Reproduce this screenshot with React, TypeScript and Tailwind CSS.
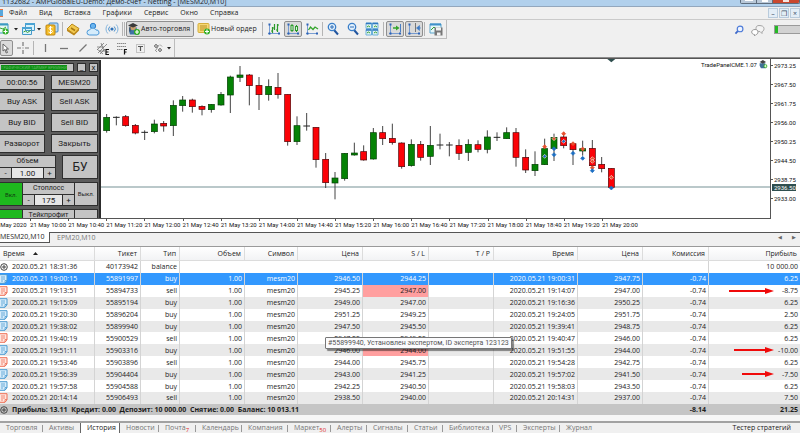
import { type ReactNode } from 'react'
import clsx from 'clsx'

const MENU = ['Файл', 'Вид', 'Вставка', 'Графики', 'Сервис', 'Окно', 'Справка']

const PRICES = ['2973.25', '2967.50', '2961.75', '2956.00', '2950.25', '2944.50', '2938.75', '2933.00']

const TIMES = [
  '2020', '10:00', '10:40', '11:20', '12:00', '12:40', '13:20', '14:00', '14:40',
  '15:20', '16:00', '16:40', '17:20', '18:00', '18:40', '19:20', '20:00',
]

// [high, body top, body bottom, low, up = 1 / down = 0]
const CANDLES = [
  [165, 175, 215, 221, 1], [172, 174, 175, 199, 0], [168, 173, 200, 203, 0], [195, 199, 222, 226, 0],
  [214, 219, 221, 243, 0], [182, 195, 218, 223, 1], [186, 193, 201, 218, 0], [124, 139, 200, 231, 1],
  [111, 123, 140, 158, 1], [119, 123, 143, 161, 0], [139, 142, 151, 169, 0], [135, 136, 152, 161, 1],
  [99, 106, 138, 140, 1], [50, 54, 108, 162, 1], [21, 48, 55, 69, 1], [45, 48, 80, 139, 0],
  [54, 79, 107, 153, 0], [61, 82, 107, 125, 1], [42, 85, 107, 119, 0], [106, 106, 248, 260, 0],
  [172, 200, 248, 258, 1], [162, 200, 202, 215, 0], [205, 205, 302, 326, 0], [282, 301, 371, 387, 0],
  [339, 357, 372, 421, 1], [282, 283, 359, 365, 1], [251, 282, 288, 290, 1], [259, 278, 303, 305, 0],
  [207, 221, 300, 302, 1], [201, 221, 239, 258, 0], [194, 238, 251, 257, 0], [250, 252, 323, 329, 0],
  [241, 256, 320, 323, 1], [246, 256, 295, 305, 0], [201, 259, 292, 318, 1], [224, 257, 259, 271, 0],
  [249, 257, 259, 292, 0], [241, 259, 283, 303, 0], [241, 256, 280, 306, 1], [244, 257, 271, 280, 0],
  [214, 234, 271, 283, 1], [220, 234, 235, 246, 0], [205, 221, 239, 239, 1], [207, 221, 295, 323, 0],
  [271, 295, 333, 342, 0], [277, 316, 335, 351, 1], [239, 269, 317, 318, 1], [224, 235, 269, 306, 1],
  [220, 234, 260, 268, 0], [250, 254, 272, 318, 0], [245, 269, 276, 290, 1], [243, 268, 320, 338, 0],
  [294, 316, 329, 340, 0], [328, 328, 385, 388, 0],
]

// [candle index, y, colour, outlined]
const DEALS: [number, number, string, boolean][] = [
  [46, 263, '#e8502e', false], [46, 292, '#1c6fc4', true], [47, 239, '#e8502e', true],
  [47, 269, '#1c6fc4', false], [47, 287, '#1c6fc4', false], [48, 224, '#e8502e', false],
  [48, 247, '#1c6fc4', true], [49, 254, '#e8502e', false], [49, 283, '#1c6fc4', false],
  [50, 270, '#e8502e', false], [50, 298, '#1c6fc4', false], [51, 299, '#e8502e', true],
  [51, 307, '#e8502e', true], [51, 326, '#e8502e', false], [51, 335, '#1c6fc4', false],
  [53, 355, '#e8502e', true], [53, 387, '#1c6fc4', false],
]

const TRADES = [
  { time: '19:00:15', ticket: '55891997', type: 'buy', open: '2946.50', sl: '2944.25', close: '19:00:31', price: '2947.75', profit: '6.25' },
  { time: '19:13:51', ticket: '55894733', type: 'sell', open: '2945.25', sl: '2947.00', close: '19:14:07', price: '2947.00', profit: '-8.75', stopped: true, arrow: 45 },
  { time: '19:15:09', ticket: '55895194', type: 'buy', open: '2949.00', sl: '2947.00', close: '19:16:36', price: '2950.25', profit: '6.25' },
  { time: '19:20:30', ticket: '55896204', type: 'buy', open: '2951.25', sl: '2949.25', close: '19:24:05', price: '2951.75', profit: '2.50' },
  { time: '19:38:02', ticket: '55899940', type: 'buy', open: '2947.50', sl: '2945.50', close: '19:39:41', price: '2948.75', profit: '6.25' },
  { time: '19:40:19', ticket: '55900529', type: 'sell', open: '2947.25', sl: '2949.25', close: '19:40:47', price: '2946.00', profit: '6.25' },
  { time: '19:51:11', ticket: '55903316', type: 'buy', open: '2946.00', sl: '2944.00', close: '19:51:55', price: '2944.00', profit: '-10.00', stopped: true, arrow: 40 },
  { time: '19:53:46', ticket: '55903896', type: 'sell', open: '2944.00', sl: '2945.75', close: '19:54:28', price: '2942.75', profit: '6.25' },
  { time: '19:56:39', ticket: '55904404', type: 'buy', open: '2943.00', sl: '2941.25', close: '19:57:02', price: '2941.50', profit: '-7.50', arrow: 32 },
  { time: '19:57:58', ticket: '55904588', type: 'buy', open: '2942.25', sl: '2940.50', close: '19:58:03', price: '2943.50', profit: '6.25' },
  { time: '20:14:14', ticket: '55906493', type: 'sell', open: '2938.50', sl: '2940.00', close: '20:14:31', price: '2937.00', profit: '7.50' },
]

const TABS = [
  { label: 'Торговля', width: 'w-[43px]' },
  { label: 'Активы', width: 'w-[37px]' },
  { label: 'История', width: 'w-[40px]', active: true },
  { label: 'Новости', width: 'w-[39px]' },
  { label: 'Почта', width: 'w-[37px]', badge: '7' },
  { label: 'Календарь', width: 'w-[46px]' },
  { label: 'Компания', width: 'w-[46px]' },
  { label: 'Маркет', width: 'w-[43px]', badge: '50' },
  { label: 'Алерты', width: 'w-[36px]' },
  { label: 'Сигналы', width: 'w-[41px]' },
  { label: 'Статьи', width: 'w-[35px]' },
  { label: 'Библиотека', width: 'w-[50px]' },
  { label: 'VPS', width: 'w-[24px]' },
  { label: 'Эксперты', width: 'w-[43px]' },
  { label: 'Журнал', width: 'w-[37px]' },
]

function Icon({ children, className }: { children: ReactNode; className?: string }) {
  return (
    <svg viewBox="0 0 14 14" fill="none" aria-hidden="true" className={clsx('shrink-0', className ?? 'size-[14px]')}>
      {children}
    </svg>
  )
}

function Tool({ label, width, pressed, children }: { label: string; width: string; pressed?: boolean; children: ReactNode }) {
  return (
    <button
      aria-label={label}
      className={clsx(
        'flex h-4 shrink-0 items-center justify-center',
        width,
        pressed && 'rounded-[2px] border border-[#8f8f8f] bg-[#dadada]'
      )}
    >
      {children}
    </button>
  )
}

function Separator() {
  return <span className="h-[14px] w-px shrink-0 bg-[#b5b5b5]" />
}

function Drop() {
  return (
    <svg viewBox="0 0 4 3" aria-hidden="true" className="h-[3px] w-1 shrink-0">
      <path d="M0 0h4L2 2.6z" fill="#222" />
    </svg>
  )
}

function Plus({ x, y }: { x: number; y: number }) {
  return (
    <g>
      <circle cx={x} cy={y} r="3" fill="#2fae22" />
      <path d={`M${x - 2} ${y}h4M${x} ${y - 2}v4`} stroke="#fff" strokeWidth="1.2" />
    </g>
  )
}

function Axes() {
  return <path d="M2.5 2v10.500M1 11.500h11.500" stroke="#6b94cf" strokeWidth=".9" />
}

function AxisDots() {
  return <path d="M1.500 1.500h2v2h-2zM1.500 10.500h2v2h-2zM11 10.500h2v2h-2z" fill="#2d62b5" />
}

function Toolbar() {
  return (
    <div className="flex h-[19px] items-center">
      <div className="flex h-[19px] items-center border-r border-b border-[#bdbdbd]">
        <Tool label="Новый график" width="w-[11px]">
          <Icon className="-ml-1 size-[14px]">
            <path d="M0 2h11v9H0z" fill="#e8f7f2" stroke="#3c9bc2" />
            <path d="M0 2.5h11" stroke="#3c9bc2" strokeWidth="2" />
            <path d="M0 8l3-2 3 1 3-2" stroke="#39a839" />
            <Plus x={8.5} y={9.5} />
          </Icon>
        </Tool>
        <span className="flex w-[9px] justify-center"><Drop /></span>
        <Tool label="Профили" width="w-4">
          <Icon>
            <path d="M4.5 1.5h9v7h-9zM1.500 5.500h9v7h-9z" fill="#d9f2fa" stroke="#4699c8" />
            <path d="M4 2h10M1 6h10" stroke="#4aa3d4" strokeWidth="2" />
            <path d="M2.500 10l2-1 2 1.500 3-2" stroke="#36a136" />
          </Icon>
        </Tool>
        <span className="flex w-[6px] justify-center"><Drop /></span>
        <Tool label="Обзор рынка" width="w-5">
          <Icon>
            <rect x="4" y="1" width="9" height="9" rx="1" fill="#b9daf4" stroke="#4489c5" />
            <rect x="1" y="3" width="9" height="10" rx="1" fill="#f4bd28" stroke="#bd8410" />
            <path d="M7.500 5.800C6.500 5 4 5 4 6.500S7.500 8 7.500 9.500 4.500 11 3.500 10M5.500 4v8" stroke="#fff" />
          </Icon>
        </Tool>
        <Separator />
        <Tool label="Навигатор" width="w-5">
          <Icon>
            <path d="M1 7l5-5 7 4.500L8 12z" fill="#f2c94f" stroke="#b98a1c" />
            <path d="M1 7v2l7 4.500L13 8.500v-2L8 12z" fill="#bd8717" />
            <path d="M5 6l4 2.500" stroke="#a87a12" strokeWidth="1.500" />
          </Icon>
        </Tool>
        <Tool label="Облако" width="w-[19px]">
          <Icon>
            <circle cx="7" cy="4" r="2.700" fill="#6cb5ee" stroke="#2f81cd" />
            <path d="M3.500 13a2.500 2.500 0 010-5C4 6 9 5.500 10 8a2.500 2.500 0 011 5z" fill="#d5ecfb" stroke="#4b98d8" />
          </Icon>
        </Tool>
        <Tool label="Сигналы" width="w-[19px]">
          <Icon>
            <circle cx="7" cy="7" r="1.600" fill="#2d70b8" />
            <path d="M4.800 4.500a3.500 3.500 0 000 5M9.200 4.500a3.500 3.500 0 010 5" stroke="#4a90cc" />
            <path d="M2.800 2.500a6.500 6.500 0 000 9M11.200 2.500a6.500 6.500 0 010 9" stroke="#86b5dd" />
          </Icon>
        </Tool>
        <span className="flex w-[5px] justify-end gap-px pr-px"><Separator /><Separator /></span>
        <button className="flex h-4 w-[68px] shrink-0 items-center rounded-[2px] border border-[#8f8f8f] bg-[#dcdcdc] whitespace-nowrap">
          <Icon>
            <path d="M2 5.500h8L9 9l3 3.500H3L2 9z" fill="#3e72a7" />
            <circle cx="6" cy="5.500" r="2.800" fill="#c99d6c" />
            <path d="M1 3.500L6 1l5 2.500-5 2z" fill="#3a3a3a" />
            <path d="M3 4.500v5" stroke="#444" />
            <Plus x={10} y={10} />
          </Icon>
          Авто-торговля
        </button>
        <button className="flex h-4 w-[66px] shrink-0 items-center pl-[3px] whitespace-nowrap">
          <Icon>
            <rect x="1" y="1.500" width="11" height="9" rx="1" fill="#f6d876" stroke="#d5ae3b" />
            <path d="M3 4h7M3 6h7M3 8h4" stroke="#b98f20" />
            <Plus x={10} y={9.500} />
          </Icon>
          Новый ордер
        </button>
        <span className="flex w-1 justify-center"><Separator /></span>
        <Tool label="Бары" width="w-5">
          <Icon>
            <Axes />
            <AxisDots />
            <path d="M5.500 5v6M4 9h1.500M5.500 6H7M10.500 2v8M9 8h1.500M10.500 3H12M7.500 2v6" stroke="#2c9a2c" strokeWidth="1.200" />
          </Icon>
        </Tool>
        <Tool label="Свечи" width="w-[18px]" pressed>
          <Icon>
            <Axes />
            <AxisDots />
            <path d="M6 2v8M10.500 3v7" stroke="#2c9a2c" />
            <rect x="5" y="3.500" width="2" height="5" fill="#dff4df" stroke="#2c9a2c" />
            <rect x="9.500" y="4.500" width="2" height="4" fill="#dff4df" stroke="#2c9a2c" />
          </Icon>
        </Tool>
        <Tool label="Линия" width="w-[20px]">
          <Icon>
            <Axes />
            <AxisDots />
            <path d="M3.500 8l2-3 2.500 2.500L10 5l3 2" stroke="#35a52d" strokeWidth="1.300" />
          </Icon>
        </Tool>
        <Separator />
        <Tool label="Увеличить" width="w-5">
          <Icon>
            <path d="M8 8l4 4.500" stroke="#21559e" strokeWidth="2" />
            <circle cx="6" cy="5" r="3.700" fill="#e4f1fc" stroke="#3b7fc9" strokeWidth="1.300" />
            <path d="M4 5h4M6 3v4" stroke="#2c6cb7" />
          </Icon>
        </Tool>
        <Tool label="Уменьшить" width="w-[19px]">
          <Icon>
            <path d="M8 8l4 4.500" stroke="#21559e" strokeWidth="2" />
            <circle cx="6" cy="5" r="3.700" fill="#e4f1fc" stroke="#3b7fc9" strokeWidth="1.300" />
            <path d="M4 5h4" stroke="#2c6cb7" />
          </Icon>
        </Tool>
        <Tool label="Окна плиткой" width="w-[19px]">
          <Icon>
            <path d="M1 1h5.500v5.500H1zM7.500 1H13v5.500H7.500zM1 7.500h5.500V13H1zM7.500 7.500H13V13H7.500z" fill="#dff2ef" stroke="#6db0dc" />
            <path d="M1 1.500h5.500M7.500 1.500H13M1 8h5.500M7.500 8H13" stroke="#3077c0" strokeWidth="1.500" />
            <path d="M2 5l1.500-1L5 5M9 5l1.500-1L12 5M2 11l1.500-1L5 11M9 11l1.500-1 1.500 1" stroke="#36a136" />
          </Icon>
        </Tool>
        <span className="flex w-[5px] justify-center"><Separator /></span>
        <Tool label="Автопрокрутка" width="w-[18px]" pressed>
          <Icon>
            <Axes />
            <AxisDots />
            <path d="M12.500 2v8" stroke="#4a7fc4" />
            <path d="M5 6h4" stroke="#35a52d" strokeWidth="1.500" />
            <path d="M8 3.500L11.500 6 8 8.500z" fill="#35a52d" />
          </Icon>
        </Tool>
        <span className="w-px" />
        <Tool label="Сдвиг графика" width="w-[18px]" pressed>
          <Icon>
            <Axes />
            <AxisDots />
            <path d="M8.500 1v9" stroke="#777" />
            <path d="M12.500 3.500L9.500 6l3 2.500zM12 6h2" fill="#3b79c4" stroke="#3b79c4" strokeWidth=".6" />
          </Icon>
        </Tool>
        <span className="flex w-[3px] justify-center"><Separator /></span>
        <Tool label="Шаблоны" width="w-[20px]">
          <Icon>
            <path d="M1 2h11v9H1z" fill="#e5f6f8" stroke="#5aa5cd" />
            <path d="M1 2.500h11" stroke="#3f90ca" strokeWidth="2" />
            <path d="M2 8l3-3 2 2" stroke="#36a136" />
            <path d="M5.500 5.500h8v8h-8z" fill="#777" />
            <path d="M7 5.500h5v3H7zM8 10.500h3.500v3H8z" fill="#f2f2f2" />
          </Icon>
        </Tool>
      </div>
      <div className="ml-auto flex items-center">
        <Tool label="Поиск" width="w-[10px]">
          <Icon className="size-[10px]">
            <path d="M6 8l-4 4" stroke="#3c67c9" strokeWidth="2.500" />
            <circle cx="8.500" cy="5.500" r="4" fill="#eef4ff" stroke="#4d7bd8" strokeWidth="1.600" />
          </Icon>
        </Tool>
        <Tool label="Чат" width="w-[28px]">
          <Icon>
            <path d="M8 2.500c3 0 5 1 5 3s-1 3-2 3v2l-2-2c-3 0-4-1-4-3s1-3 3-3z" fill="#f4f4f4" stroke="#a5a5a5" />
            <path d="M4 6.500c2 0 3 1 3 2.500S6 11.500 5 11.500L3.500 13v-1.500C2 11.500.700 10.500.700 9S2 6.500 4 6.500z" fill="#fff" stroke="#9a9a9a" />
          </Icon>
        </Tool>
        <span className="ml-[2px] flex h-[9px] w-[26px] border border-r-0 border-[#9a9a9a] bg-[#d2d2d2]">
          <span className="w-[3px] bg-[#25b925]" />
        </span>
      </div>
    </div>
  )
}

function DrawingBar() {
  return (
    <div className="flex h-[18px] items-center">
      <div className="flex h-[18px] w-[175px] items-center border-r border-[#bdbdbd]">
        <Tool label="Курсор" width="w-[13px]" pressed>
          <Icon className="-ml-1 size-[14px]">
            <path d="M5 3v7l2-1.500L8.200 12l1.300-.5L8 8h2.500z" fill="#fff" stroke="#666" />
          </Icon>
        </Tool>
        <Tool label="Перекрестие" width="w-[20px]">
          <Icon>
            <path d="M7 1v4M7 9v4M1 7h4M9 7h4" stroke="#777" strokeWidth="1.200" />
            <path d="M6.500 7h1" stroke="#777" />
          </Icon>
        </Tool>
        <Separator />
        <Tool label="Вертикальная линия" width="w-[21px]">
          <Icon><path d="M7.500 3v8" stroke="#777" strokeWidth="1.300" /></Icon>
        </Tool>
        <Tool label="Горизонтальная линия" width="w-[18px]">
          <Icon><path d="M3 7.500h8" stroke="#777" strokeWidth="1.300" /></Icon>
        </Tool>
        <Tool label="Трендовая линия" width="w-[19px]">
          <Icon><path d="M3.500 10.500l7-7" stroke="#777" strokeWidth="1.300" /></Icon>
        </Tool>
        <Tool label="Канал" width="w-[21px]">
          <Icon>
            <path d="M1 9l7-7M2 12l9-9M4 13l5-5M1 6h7M3 10h6M5 2l3 8M1 8l6 5" stroke="#777" strokeWidth=".8" />
            <path d="M13 8.500h-3v5h3M10 11h2.500" stroke="#111" strokeWidth="1.200" />
          </Icon>
        </Tool>
        <Tool label="Фибоначчи" width="w-[18px]">
          <Icon>
            <path d="M2 2.500h9M2 5.500h9M2 8.500h6" stroke="#888" strokeDasharray="1.500 .5" />
            <path d="M12 8.500H9.500v5M9.500 11h2" stroke="#111" strokeWidth="1.200" />
          </Icon>
        </Tool>
        <Tool label="Текст" width="w-[18px]">
          <Icon>
            <path d="M3.500 3.500h8v8h-8z" stroke="#999" strokeDasharray="1 1" />
            <path d="M5 5.500h5M7.500 5.500V10" stroke="#555" strokeWidth="1.200" />
          </Icon>
        </Tool>
        <Tool label="Объекты" width="w-[18px]">
          <Icon>
            <path d="M3 5l2-2 2 2-2 2zM7 9l2-2 2 2-2 2z" fill="#aaa" stroke="#777" strokeWidth=".8" />
            <path d="M9 3.500l2 2M4 9l2 2M8 4l-3 5" stroke="#999" />
          </Icon>
        </Tool>
        <Drop />
      </div>
    </div>
  )
}

function PanelButton({ children, className }: { children: ReactNode; className?: string }) {
  return (
    <button className={clsx('flex items-center justify-center border border-[#2f2f2f] bg-[#c4c4c4] leading-none text-[#222]', className)}>
      {children}
    </button>
  )
}

function Stepper({ label, value }: { label: string; value: string }) {
  return (
    <div className="flex h-6 min-w-0 flex-1 flex-col border-y border-[#2f2f2f] bg-[#c4c4c4] text-[#222]">
      <span className="h-[11px] text-center text-[7px] leading-[11px]">{label}</span>
      <div className="flex h-[11px] border-t border-[#2f2f2f]">
        <button aria-label={`${label} меньше`} className="w-[11px] leading-[9px]">-</button>
        <input
          aria-label={label}
          defaultValue={value}
          className="w-0 min-w-0 flex-1 border-x border-[#2f2f2f] bg-[#e6e6e6] text-center leading-[9px]"
        />
        <button aria-label={`${label} больше`} className="w-[11px] leading-[9px]">+</button>
      </div>
    </div>
  )
}

function TradePanel() {
  const rows = [['Buy ASK', 'Sell ASK'], ['Buy BID', 'Sell BID'], ['Разворот', 'Закрыть']]
  return (
    <div className="absolute top-px bottom-0 left-0 flex w-[101px] flex-col overflow-hidden border-t border-r-2 border-[#2c2c2c] bg-[#5c5c5c] pt-[2px] pr-px font-['Roboto',sans-serif] text-[8px]">
      <div className="mb-[3px] flex h-[9px] shrink-0 gap-[3px]">
        <div className="flex flex-1 items-center border border-l-0 border-[#2f2f2f] bg-[#c4c4c4] pl-px">
          <span className="h-[5px] w-[66px] bg-[#0d8f14] text-center text-[4px] leading-[5px] whitespace-nowrap text-[#5fb85f]">
            ГРАФИЧЕСКИЙ ТАЙМЕР ВРЕМЕНИ
          </span>
        </div>
        <PanelButton className="w-[9px]">_</PanelButton>
        <PanelButton className="w-[9px]">x</PanelButton>
      </div>
      <div className="mb-[2px] flex h-[15px] shrink-0 gap-[6px]">
        <PanelButton className="flex-1 border-l-0">00:00:56</PanelButton>
        <PanelButton className="w-[47px]">MESM20</PanelButton>
      </div>
      {rows.map(([left, right]) => (
        <div key={left} className="mb-[2px] flex h-[19px] shrink-0 gap-[6px]">
          <PanelButton className="flex-1 border-l-0">{left}</PanelButton>
          <PanelButton className="w-[47px]">{right}</PanelButton>
        </div>
      ))}
      <div className="mb-[3px] flex h-6 shrink-0 gap-[6px]">
        <div className="flex min-w-0 flex-1 border-r border-[#2f2f2f]"><Stepper label="Объем" value="1.00" /></div>
        <PanelButton className="w-[36px] text-[12px]">БУ</PanelButton>
      </div>
      <div className="mb-[3px] flex h-6 shrink-0">
        <button className="w-[23px] border border-l-0 border-[#2f2f2f] bg-[#1eb91e] text-[6px] text-[#103a10]">Вкл.</button>
        <Stepper label="Стоплосс" value="175" />
        <PanelButton className="w-6 text-[6px]">Выкл.</PanelButton>
      </div>
      <div className="flex h-6 shrink-0">
        <button aria-label="Включить тейкпрофит" className="w-[23px] border border-l-0 border-[#2f2f2f] bg-[#1eb91e]" />
        <Stepper label="Тейкпрофит" value="175" />
        <PanelButton className="w-6">{''}</PanelButton>
      </div>
    </div>
  )
}

function Candles() {
  const x = (i: number) => Math.round(320 + i * 28.56)
  return (
    <svg viewBox="0 0 2310 477" preserveAspectRatio="xMinYMin slice" aria-hidden="true" className="h-full w-full">
      <path d="M0 384H2310" stroke="#a3b6b8" strokeWidth="4" />
      <path d="M1822 0h24l-12 10z" fill="#2f4f4f" />
      {CANDLES.map(([high, top, bottom, low, up], i) => (
        <g key={i}>
          <path d={`M${x(i)} ${high}V${low}`} stroke="#444" strokeWidth="3" />
          {bottom - top < 3 ? (
            <path d={`M${x(i) - 10} ${top + 1}h20`} stroke="#222" strokeWidth="3" />
          ) : (
            <rect
              x={x(i) - 9}
              y={top}
              width="18"
              height={bottom - top}
              fill={up ? '#058205' : '#fb0207'}
              stroke={up ? '#043d04' : '#4d0507'}
              strokeWidth="2"
            />
          )}
        </g>
      ))}
      {DEALS.map(([i, y, color, outlined], n) => (
        <path
          key={n}
          d={`M${x(i)} ${y - 6}l6 6l-6 6l-6 -6z`}
          fill={color}
          stroke={outlined ? '#f7dcd6' : color}
          strokeWidth="2"
        />
      ))}
    </svg>
  )
}

function Chart() {
  return (
    <section className="border-t border-[#555] bg-white font-['Roboto',sans-serif] text-[6px] text-[#111]">
      <div className="flex h-[160px]">
        <div className="relative min-w-0 flex-1 border-r border-b border-[#555]">
          <Candles />
          <div className="absolute top-px right-[2px] flex items-center gap-[2px]">
            <span>TradePanelCME.1.07</span>
            <Icon className="size-[9px]">
              <path d="M1 5h9l-1 3 2 5H3L1 9z" fill="#3f7097" />
              <path d="M1 3l5-3 5 3-5 3z" fill="#444" />
              <Plus x={10} y={9.5} />
            </Icon>
          </div>
          <TradePanel />
        </div>
        <div className="relative flex w-[29px] flex-col gap-[7px]">
          {PRICES.map((p) => (
            <span key={p} className="flex h-3 items-center gap-px before:h-px before:w-[2px] before:bg-[#555]">
              {p}
            </span>
          ))}
          <span className="absolute top-[125px] left-px h-[7px] w-[24px] bg-[#2f4f4f] pl-[2px] leading-[7px] text-white">2936.50</span>
        </div>
      </div>
      <div className="h-[13px] overflow-hidden">
        <div className="-ml-2 grid w-[648px] grid-cols-17">
          {TIMES.map((t) => (
            <span key={t} className="flex flex-col whitespace-nowrap before:h-[2px] before:w-px before:bg-[#555]">
              <span className="leading-[8px]">21 May {t}</span>
            </span>
          ))}
        </div>
      </div>
    </section>
  )
}

function DocIcon({ type }: { type: string }) {
  const sell = type === 'sell'
  return (
    <svg viewBox="0 0 8 10" fill="none" aria-hidden="true" className="h-[10px] w-2 shrink-0">
      <path
        d="M-1 .700H7v6L5 9.300H-1z"
        fill={sell ? '#ffe6df' : '#d8edfb'}
        stroke={sell ? '#ee6f55' : '#4b9bd1'}
      />
      <path d="M1 3h4M1 5h4M1 7h2M7 6.500H5V9" stroke={sell ? '#ee6f55' : '#4b9bd1'} strokeWidth=".8" />
    </svg>
  )
}

function CircleIcon() {
  return (
    <svg viewBox="0 0 8 8" fill="none" aria-hidden="true" className="size-2 shrink-0">
      <circle cx="4" cy="4" r="3.300" stroke="#444" />
      <path d="M2 4h4M4 2v4" stroke="#444" />
    </svg>
  )
}

function Arrow({ length }: { length: number }) {
  return (
    <span className="absolute top-[3px] right-[26px] flex h-[6px] items-center" style={{ width: length }}>
      <span className="h-[2px] flex-1 bg-[#f00a0a]" />
      <svg viewBox="0 0 9 6" aria-hidden="true" className="h-[6px] w-[9px]">
        <path d="M0 0l9 3-9 3z" fill="#f00a0a" />
      </svg>
    </span>
  )
}

function History() {
  const heads = ['Тикет', 'Тип', 'Объем', 'Символ', 'Цена', 'S / L', 'T / P', 'Время', 'Цена', 'Комиссия', 'Прибыль']
  const cell = 'border-r border-[#d4d4d4] pr-[2px]'
  return (
    <div className="relative border-t border-[#9a9a9a] bg-white">
      <table className="h-[168px] w-full table-fixed border-separate border-spacing-0 text-right leading-[11px] whitespace-nowrap text-[#1c1c1c]">
        <colgroup>
          <col className="w-[95px]" />
          <col className="w-[46px]" />
          <col className="w-[39px]" />
          <col className="w-[65px]" />
          <col className="w-[53px]" />
          <col className="w-[65px]" />
          <col className="w-[66px]" />
          <col className="w-[65px]" />
          <col className="w-[84px]" />
          <col className="w-[65px]" />
          <col className="w-[66px]" />
          <col />
        </colgroup>
        <thead>
          <tr className="h-[14px] bg-linear-to-b from-white to-[#f1f2f4]">
            <th className="border-r border-b border-[#dcdcdc] pl-[3px] text-left font-normal">
              <span className="flex items-center gap-2">
                Время
                <svg viewBox="0 0 5 3" aria-hidden="true" className="h-[3px] w-[5px]">
                  <path d="M0 3L2.500 0 5 3z" fill="#222" />
                </svg>
              </span>
            </th>
            {heads.map((h, i) => (
              <th key={i} className="border-r border-b border-[#dcdcdc] pr-[3px] font-normal last:border-r-0">{h}</th>
            ))}
          </tr>
        </thead>
        <tbody>
          <tr>
            <td className={cell}>
              <span className="flex items-center gap-1"><CircleIcon />2020.05.21 18:31:36</span>
            </td>
            <td className={cell}>40173942</td>
            <td className={cell}>balance</td>
            <td colSpan={8} className={cell} />
            <td className="pr-[2px]">10 000.00</td>
          </tr>
          {TRADES.map((t, i) => (
            <tr key={t.ticket} className={clsx(i === 0 && 'bg-[#3298fe] text-white', i > 0 && i % 2 === 0 && 'bg-[#e9e9e9]')}>
              <td className={cell}>
                <span className="flex items-center gap-1"><DocIcon type={t.type} />2020.05.21 {t.time}</span>
              </td>
              <td className={cell}>{t.ticket}</td>
              <td className={cell}>{t.type}</td>
              <td className={cell}>1.00</td>
              <td className={cell}>mesm20</td>
              <td className={cell}>{t.open}</td>
              <td className={clsx(cell, t.stopped && 'bg-[#ff9f9f]')}>{t.sl}</td>
              <td className={cell} />
              <td className={cell}>2020.05.21 {t.close}</td>
              <td className={cell}>{t.price}</td>
              <td className={cell}>-0.74</td>
              <td className="relative pr-[2px]">
                {t.arrow && <Arrow length={t.arrow} />}
                {t.profit}
              </td>
            </tr>
          ))}
        </tbody>
        <tfoot>
          <tr className="bg-[#c5c5c5] font-bold">
            <td colSpan={10} className="text-left">
              <span className="flex items-center gap-1">
                <CircleIcon />
                <span className="whitespace-pre">Прибыль: 13.11  Кредит: 0.00  Депозит: 10 000.00  Снятие: 0.00  Баланс: 10 013.11</span>
              </span>
            </td>
            <td className="pr-[3px]">-8.14</td>
            <td className="pr-[2px]">21.25</td>
          </tr>
        </tfoot>
      </table>
      <div role="tooltip" className="absolute top-[90px] left-[325px] h-3 rounded-[1px] border border-[#777] bg-[#fbfbfd] px-[2px] font-['Roboto',sans-serif] leading-[10px] whitespace-nowrap text-[#555] shadow-[2px_2px_1px_rgba(0,0,0,0.45)]">
        #55899940, Установлен экспертом, ID эксперта 123123
      </div>
    </div>
  )
}

export default function App() {
  return (
    <div className="min-w-[800px] overflow-hidden bg-[#f0f0f0] font-['Open_Sans',sans-serif] text-[7px] text-[#1c1c1c]">
      <header className="flex h-[7px] items-end border-b border-[#93a7bd] bg-[#b1d0ec] pl-[2px]">
        <span className="mb-px leading-[7px] whitespace-nowrap">1132682 - AMPGlobalEU-Demo: Демо-счет - Netting - [MESM20,M10]</span>
        <div className="mb-[2px] ml-auto flex h-1 overflow-hidden rounded-b-[2px] border border-t-0 border-[#5e6d7d]">
          <button aria-label="Свернуть" className="flex w-4 items-start justify-center border-r border-[#5e6d7d] bg-[#b9c8d8]"><span className="h-px w-2 bg-white" /></button>
          <button aria-label="Развернуть" className="flex w-4 items-start justify-center border-r border-[#5e6d7d] bg-[#b9c8d8]"><span className="h-[2px] w-[6px] bg-white" /></button>
          <button aria-label="Закрыть" className="flex w-[26px] items-start justify-center bg-[#c9472f]"><span className="h-[2px] w-[6px] bg-[#f5e4e0]" /></button>
        </div>
      </header>
      <nav className="flex h-[13px] items-center border-b border-[#cacaca]">
        <span className="mr-[6px] h-2 w-[3px] border-y border-[#e57340] bg-[#59a7dc]" />
        <div className="flex gap-3">
          {MENU.map((item) => (
            <button key={item} className="leading-[10px]">{item}</button>
          ))}
        </div>
        <div className="ml-auto flex gap-px">
          {['–', '❐', '×'].map((c) => (
            <button key={c} className="flex h-[10px] w-[10px] items-center justify-center border border-[#b9cbdc] bg-[#e3edf6] text-[7px] leading-none text-[#3c5166]">{c}</button>
          ))}
        </div>
      </nav>
      <Toolbar />
      <DrawingBar />
      <div className="h-px bg-[#8c8c8c]" />
      <Chart />
      <div className="flex h-[14px] items-start pb-[3px]">
        <button className="-ml-[2px] h-[11px] w-[52px] border-r border-b border-[#555] bg-white pl-[2px] text-left leading-[10px]">MESM20,M10</button>
        <div className="flex h-[11px] flex-1 items-center justify-between border-t border-[#555] pr-1 pl-[7px]">
          <button className="text-[#777]">EPM20,M10</button>
          <div className="flex gap-[10px] text-[5px] text-[#666]">
            <button aria-label="Назад">◀</button>
            <button aria-label="Вперёд">▶</button>
          </div>
        </div>
      </div>
      <History />
      <div className="h-[6px] bg-[#f6f6f6]" />
      <footer className="flex h-[13px] items-stretch border-t-2 border-[#a2a2a2]">
        {TABS.map((tab, i) => (
          <button
            key={tab.label}
            className={clsx(
              'flex shrink-0 items-center pl-[6px] whitespace-nowrap',
              tab.width,
              tab.active
                ? 'border-x border-[#666] bg-white'
                : 'text-[#777] after:ml-auto after:h-[7px] after:w-px after:bg-[#999]',
              (i === 1 || i === TABS.length - 1) && 'after:hidden'
            )}
          >
            {tab.label}
            {tab.badge && <span className="self-end text-[6px] leading-[7px] text-[#e01f1f]">{tab.badge}</span>}
          </button>
        ))}
        <button className="mr-[9px] ml-auto">Тестер стратегий</button>
      </footer>
    </div>
  )
}
